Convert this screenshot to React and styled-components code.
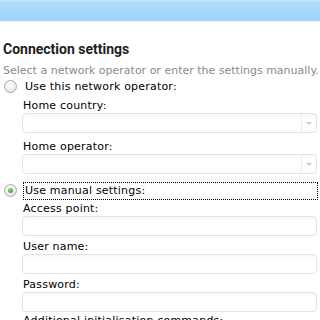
import React from "react";
import styled, { createGlobalStyle } from "styled-components";

const Global = createGlobalStyle`
    html, body {
        margin: 0;
        padding: 0;
        background: #ffffff;
        font-family: "DejaVu Sans", Verdana, sans-serif;
        -webkit-font-smoothing: none;
    }
`

const Page = styled.div`
    width: 320px;
    height: 320px;
    overflow: hidden;
    background: #ffffff;
`

const TopBar = styled.div`
    height: 21px;
    background: linear-gradient(to bottom, #c4e5fc 0px, #b0dcfb 2px, #a6d7fb 12px, #9fd3fb 21px);
    border-bottom: 1px solid #eaf5fd;
`

const Content = styled.div`
    padding: 0 3px 0 3px;
`

const Heading = styled.h1`
    margin: 17px 0 0 0;
    font-family: "Liberation Sans Narrow", Roboto, sans-serif;
    font-weight: bold;
    font-size: 14px;
    line-height: 20px;
    color: #1e1e1e;
`

const Subtitle = styled.p`
    margin: 4px 0 0 0;
    font-size: 11px;
    line-height: 15px;
    color: #8a8a8a;
    white-space: nowrap;
`

const OptionRow = styled.div`
    display: flex;
    align-items: center;
    height: ${p => p.h || 17}px;
    margin-top: ${p => p.mt || 0}px;
`

const Radio = styled.span`
    box-sizing: border-box;
    width: 13px;
    height: 13px;
    margin: 0 6px 0 1px;
    border-radius: 50%;
    border: 1px solid #a9a9a9;
    background: radial-gradient(circle at 40% 35%, #ffffff 0%, #f3f3f3 45%, #d6d6d6 100%);
    display: flex;
    align-items: center;
    justify-content: center;
    flex-shrink: 0;

    &::after {
        content: "";
        display: ${p => (p.checked ? "block" : "none")};
        width: 5px;
        height: 5px;
        border-radius: 50%;
        background: radial-gradient(circle at 40% 35%, #8fe07a 0%, #3aa52a 70%, #2d7f20 100%);
    }
`

const OptionLabel = styled.span`
    flex: 1;
    font-size: 11px;
    letter-spacing: 0.2px;
    line-height: 16px;
    color: #000;
    padding-left: 1px;
    border: 1px dotted ${p => (p.focused ? "#000" : "transparent")};
    height: 16px;
    margin-right: -1px;
`

const Fields = styled.div`
    padding-left: 19px;
`

const FieldLabel = styled.div`
    font-size: 11px;
    letter-spacing: 0.2px;
    line-height: 15px;
    color: #000;
    margin-top: ${p => p.mt || 0}px;
    padding-left: 1px;
    white-space: nowrap;
`

const Box = styled.div`
    box-sizing: border-box;
    height: 20px;
    border: 1px solid #e2e2e2;
    border-radius: 4px;
    background: linear-gradient(to bottom, #f7f7f7 0px, #ffffff 4px);
    display: flex;
    justify-content: flex-end;
`

const ArrowCell = styled.div`
    width: 14px;
    border-left: 1px solid #ececec;
    display: flex;
    align-items: center;
    justify-content: center;

    &::after {
        content: "";
        width: 0;
        height: 0;
        border-left: 3px solid transparent;
        border-right: 3px solid transparent;
        border-top: 3px solid #c8c8c8;
    }
`

const Select = () => (
    <Box>
        <ArrowCell />
    </Box>
)

export default function App() {
    return (
        <Page>
            <Global />
            <TopBar />
            <Content>
                <Heading>Connection settings</Heading>
                <Subtitle>Select a network operator or enter the settings manually.</Subtitle>
                <OptionRow>
                    <Radio />
                    <OptionLabel>Use this network operator:</OptionLabel>
                </OptionRow>
                <Fields>
                    <FieldLabel mt={3}>Home country:</FieldLabel>
                    <Select />
                    <FieldLabel mt={6}>Home operator:</FieldLabel>
                    <Select />
                </Fields>
                <OptionRow mt={7} h={19}>
                    <Radio checked />
                    <OptionLabel focused>Use manual settings:</OptionLabel>
                </OptionRow>
                <Fields>
                    <FieldLabel mt={1}>Access point:</FieldLabel>
                    <Box />
                    <FieldLabel mt={3}>User name:</FieldLabel>
                    <Box />
                    <FieldLabel mt={3}>Password:</FieldLabel>
                    <Box />
                    <FieldLabel mt={1}>Additional initialisation commands:</FieldLabel>
                </Fields>
            </Content>
        </Page>
    )
}
